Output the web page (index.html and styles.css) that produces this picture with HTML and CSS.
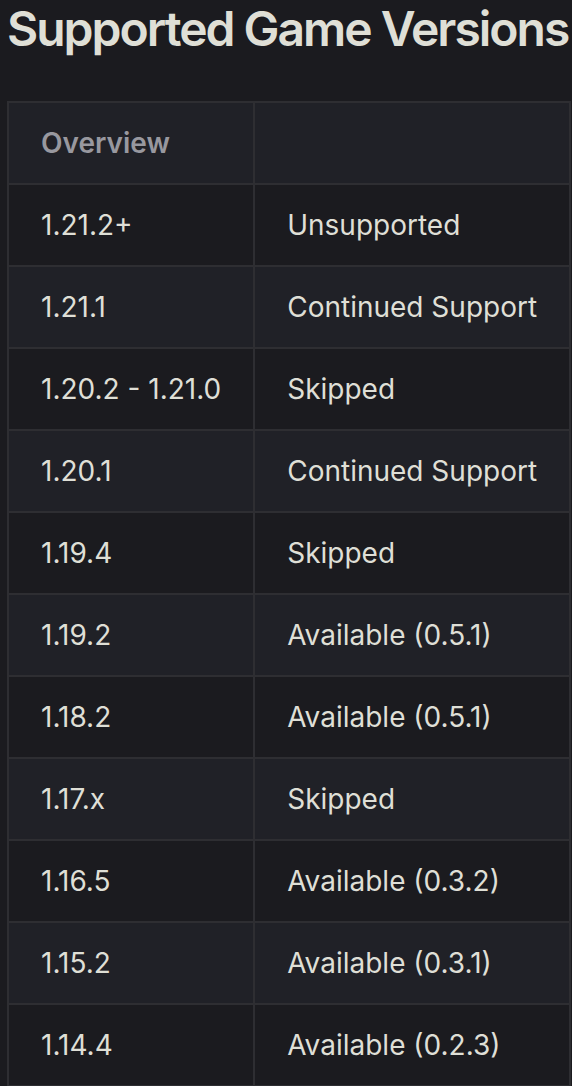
FILE: index.html
```html
<!DOCTYPE html>
<html lang="en">
<head>
<meta charset="utf-8">
<title>Supported Game Versions</title>
<link rel="stylesheet" href="styles.css">
</head>
<body>
<main class="doc">
  <h2 class="title">Supported Game Versions</h2>
  <table class="versions">
    <thead>
      <tr><th class="col-ver">Overview</th><th></th></tr>
    </thead>
    <tbody>
      <tr><td>1.21.2+</td><td>Unsupported</td></tr>
      <tr><td>1.21.1</td><td>Continued Support</td></tr>
      <tr><td>1.20.2 - 1.21.0</td><td>Skipped</td></tr>
      <tr><td>1.20.1</td><td>Continued Support</td></tr>
      <tr><td>1.19.4</td><td>Skipped</td></tr>
      <tr><td>1.19.2</td><td>Available (0.5.1)</td></tr>
      <tr><td>1.18.2</td><td>Available (0.5.1)</td></tr>
      <tr><td>1.17.x</td><td>Skipped</td></tr>
      <tr><td>1.16.5</td><td>Available (0.3.2)</td></tr>
      <tr><td>1.15.2</td><td>Available (0.3.1)</td></tr>
      <tr><td>1.14.4</td><td>Available (0.2.3)</td></tr>
    </tbody>
  </table>
</main>
</body>
</html>
```
FILE: styles.css
```css
html, body {
  margin: 0;
  padding: 0;
  background: #1b1b1f;
}
body {
  font-family: Inter, "Noto Sans", "Liberation Sans", sans-serif;
  color: #dfdfd6;
  overflow: hidden;
}
.doc {
  padding-left: 7px;
  margin-top: -3px;
}
.title {
  margin: 0;
  font-size: 48px;
  line-height: 64px;
  font-weight: 600;
  letter-spacing: -2px;
  white-space: nowrap;
  color: #dfdfd6;
}
.versions {
  margin-top: 40px;
  border-collapse: collapse;
  width: 564px;
  font-size: 28px;
}
.versions th,
.versions td {
  border: 2px solid #2e2e32;
  padding: 16px 32px;
  line-height: 48px;
  text-align: left;
  white-space: nowrap;
}
.versions th {
  font-weight: 600;
  color: #98989f;
  background: #202127;
}
.col-ver {
  width: 180px;
}
.versions td {
  color: #dfdfd6;
  font-weight: 400;
}
.versions tbody tr {
  background: #1b1b1f;
}
.versions tbody tr:nth-child(2n) {
  background: #202127;
}
```
